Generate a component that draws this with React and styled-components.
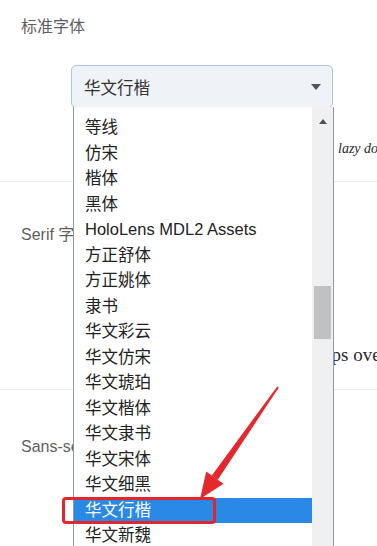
import React from 'react'
import styled, { createGlobalStyle } from 'styled-components'

const GlobalStyle = createGlobalStyle`
  html, body {
    margin: 0;
    padding: 0;
    background: #fff;
    overflow: hidden;
  }
  body {
    font-family: "Liberation Sans", "Noto Sans CJK SC", sans-serif;
  }
`

const fonts = [
  '等线', '仿宋', '楷体', '黑体', 'HoloLens MDL2 Assets', '方正舒体', '方正姚体',
  '隶书', '华文彩云', '华文仿宋', '华文琥珀', '华文楷体', '华文隶书', '华文宋体',
  '华文细黑', '华文行楷', '华文新魏', '华文中宋', '宋体'
]

const Page = styled.div`
  position: relative;
  width: 377px;
  height: 546px;
  overflow: hidden;
`

const Section = styled.section`
  border-bottom: 1px solid #ececec;
  height: ${p => p.$height}px;
  padding-top: ${p => p.$top}px;
  box-sizing: border-box;
  overflow: hidden;
`

const Label = styled.div`
  padding-left: 21px;
  font-size: 16px;
  line-height: 22px;
  color: #5e5e5e;
  white-space: nowrap;
`

const Select = styled.div`
  display: flex;
  align-items: center;
  justify-content: space-between;
  margin: 27px 0 0 71px;
  width: 262px;
  height: 43px;
  box-sizing: border-box;
  padding: 0 11px 0 12px;
  border: 1.5px solid #adc3e2;
  border-radius: 5px;
  background: #eff2f6;
  font-size: 16.5px;
  color: #333;
`

const Caret = styled.span`
  width: 0;
  height: 0;
  border-left: 5px solid transparent;
  border-right: 5px solid transparent;
  border-top: 6px solid #555;
`

const Preview = styled.div`
  margin-top: ${p => p.$gap}px;
  padding-left: ${p => p.$indent}px;
  white-space: nowrap;
  line-height: 22px;
  color: #2a2a2a;
  font-family: "Liberation Serif", serif;
  font-size: ${p => (p.$script ? 14 : 19)}px;
  font-style: ${p => (p.$script ? 'italic' : 'normal')};
`

const Dropdown = styled.div`
  position: absolute;
  left: 73px;
  top: 107px;
  width: 259px;
  height: 460px;
  display: flex;
  background: #fff;
  border-left: 1px solid #8f9aa8;
  border-right: 1px solid #8f9aa8;
`

const Options = styled.ul`
  flex: 1;
  list-style: none;
  margin: 0;
  padding: 8px 0 0;
`

const Option = styled.li`
  padding-left: 11px;
  height: 25.5px;
  line-height: 25.5px;
  font-size: 16.5px;
  color: ${p => (p.$active ? '#fff' : '#222')};
  background: ${p => (p.$active ? '#2a88e6' : 'transparent')};
  white-space: nowrap;
`

const Scrollbar = styled.div`
  width: 21px;
  background: #f0f0f0;
  display: flex;
  flex-direction: column;
  align-items: center;
`

const UpArrow = styled.span`
  margin-top: 12px;
  width: 0;
  height: 0;
  border-left: 4px solid transparent;
  border-right: 4px solid transparent;
  border-bottom: 5px solid #505050;
`

const Thumb = styled.span`
  margin-top: 162px;
  width: 17px;
  height: 53px;
  background: #c1c1c1;
`

const Highlight = styled.div`
  position: absolute;
  left: 62px;
  top: 497px;
  width: 154px;
  height: 27px;
  box-sizing: border-box;
  border: 3px solid #e3262b;
  border-radius: 4px;
`

const Callout = styled.svg`
  position: absolute;
  left: 0;
  top: 0;
  pointer-events: none;
`

export default function App () {
  return (
    <Page>
      <GlobalStyle />
      <Section $height={182} $top={16}>
        <Label>标准字体</Label>
        <Select>
          <span>华文行楷</span>
          <Caret />
        </Select>
        <Preview $gap={30} $indent={338} $script>lazy dog</Preview>
      </Section>
      <Section $height={208} $top={42}>
        <Label>Serif 字体</Label>
        <Preview $gap={98} $indent={302}>jumps over the lazy dog</Preview>
      </Section>
      <Section $height={160} $top={46}>
        <Label>Sans-serif 字体</Label>
      </Section>

      <Dropdown>
        <Options>
          {fonts.map(name => (
            <Option key={name} $active={name === '华文行楷'}>{name}</Option>
          ))}
        </Options>
        <Scrollbar>
          <UpArrow />
          <Thumb />
        </Scrollbar>
      </Dropdown>

      <Highlight />
      <Callout width='377' height='546' viewBox='0 0 377 546'>
        <polygon points='278.8,387.6 277.2,386.4 211.8,475.6 217.8,479.8' fill='#e5282c' />
        <polygon points='200,499 223.5,483.8 206.2,471.6' fill='#e5282c' />
      </Callout>
    </Page>
  )
}
